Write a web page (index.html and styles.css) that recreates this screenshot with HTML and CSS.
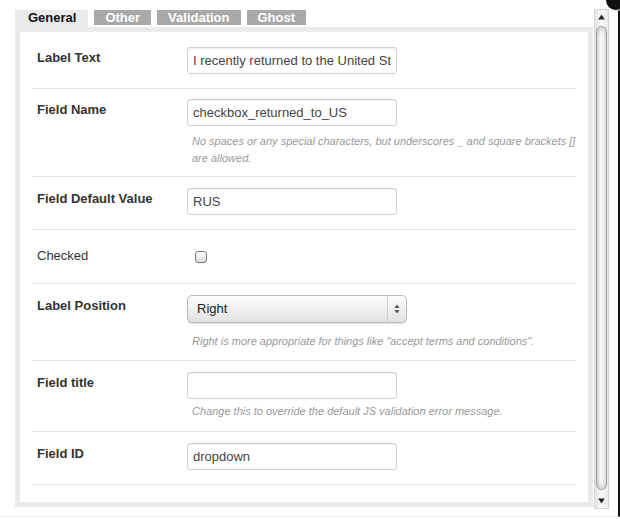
FILE: index.html
```html
<!DOCTYPE html>
<html>
<head>
<meta charset="utf-8">
<link rel="stylesheet" href="styles.css">
</head>
<body>
<div class="dialog">
  <div class="main">
    <div class="tabs">
      <span class="tab active">General</span>
      <span class="tab">Other</span>
      <span class="tab">Validation</span>
      <span class="tab">Ghost</span>
    </div>
    <div class="panel">
      <div class="row first">
        <div class="label">Label Text</div>
        <div class="control"><input class="text" type="text" value="I recently returned to the United States"></div>
      </div>
      <div class="row help-row two">
        <div class="label">Field Name</div>
        <div class="control">
          <input class="text" type="text" value="checkbox_returned_to_US">
          <p class="help">No spaces or any special characters, but underscores _ and square brackets [] are allowed.</p>
        </div>
      </div>
      <div class="row">
        <div class="label">Field Default Value</div>
        <div class="control"><input class="text" type="text" value="RUS"></div>
      </div>
      <div class="row check-row">
        <div class="label plain">Checked</div>
        <div class="control"><span class="checkbox"></span></div>
      </div>
      <div class="row help-row sel">
        <div class="label">Label Position</div>
        <div class="control">
          <div class="select"><span class="value">Right</span><span class="arrows"><svg width="6" height="10" viewBox="0 0 6 10"><path d="M3 0.5 L5.6 4 L0.4 4 Z M3 9.5 L5.6 6 L0.4 6 Z" fill="#555"/></svg></span></div>
          <p class="help">Right is more appropriate for things like "accept terms and conditions".</p>
        </div>
      </div>
      <div class="row help-row title">
        <div class="label">Field title</div>
        <div class="control">
          <input class="text" type="text" value="">
          <p class="help">Change this to override the default JS validation error message.</p>
        </div>
      </div>
      <div class="row">
        <div class="label">Field ID</div>
        <div class="control"><input class="text" type="text" value="dropdown"></div>
      </div>
    </div>
  </div>
  <div class="scrollbar">
    <div class="arrow up"><svg width="7" height="6" viewBox="0 0 7 6"><path d="M3.5 0.5 L6.8 5.5 L0.2 5.5 Z" fill="#222"/></svg></div>
    <div class="track"><div class="thumb"></div></div>
    <div class="arrow down"><svg width="7" height="6" viewBox="0 0 7 6"><path d="M3.5 5.5 L6.8 0.5 L0.2 0.5 Z" fill="#222"/></svg></div>
  </div>
  <span class="close"></span>
</div>
</body>
</html>
```
FILE: styles.css
```css
html, body {
  margin: 0;
  padding: 0;
  background: #fff;
}
body {
  font-family: "Liberation Sans", Arial, sans-serif;
  color: #333;
  width: 620px;
  height: 519px;
  overflow: hidden;
}
.dialog {
  position: relative;
  box-sizing: border-box;
  width: 620px;
  height: 517px;
  display: flex;
  padding: 0 8px 0 15px;
  border-right: 2px solid #111;
  border-bottom: 1px solid #ececec;
}
.main {
  width: 578px;
  display: flex;
  flex-direction: column;
  padding: 10px 0 9px;
  box-sizing: border-box;
}
.tabs {
  display: flex;
  gap: 6px;
  height: 17px;
  align-items: flex-start;
}
.tab {
  height: 15px;
  line-height: 15px;
  padding: 0 11px;
  background: #a9a9a9;
  color: #fff;
  font-weight: bold;
  font-size: 13px;
}
.tab.active {
  height: 17px;
  padding: 0 12px 0 13px;
  background: #ebebeb;
  color: #111;
}
.panel {
  flex: 1;
  border: 5px solid #ebebeb;
  padding: 1px 12px 0;
  overflow: hidden;
}
.row {
  display: flex;
  padding: 11px 0 14px;
  border-bottom: 1px solid #e3e3e3;
}
.row.first {
  padding-top: 14px;
}
.row.two {
  padding-top: 10px;
  padding-bottom: 9px;
}
.row.check-row {
  padding-bottom: 15px;
}
.row.sel {
  padding-bottom: 10px;
}
.row.title {
  padding-bottom: 11px;
}
.label {
  width: 150px;
  padding: 2px 0 0 5px;
  font-size: 13px;
  line-height: 18px;
  font-weight: bold;
  color: #333;
}
.label.plain {
  font-weight: normal;
  padding-top: 6px;
}
.control {
  flex: 1;
  min-height: 27px;
}
.text {
  display: block;
  box-sizing: border-box;
  width: 210px;
  height: 27px;
  margin: 0;
  padding: 0 5px;
  border: 1px solid #cfcfcf;
  border-radius: 3px;
  box-shadow: inset 0 1px 1px rgba(0,0,0,0.06);
  font-family: "Liberation Sans", Arial, sans-serif;
  font-size: 13px;
  color: #444;
  background: #fff;
  outline: none;
}
.help {
  margin: 7px 0 0 5px;
  font-size: 11px;
  line-height: 17px;
  font-style: italic;
  color: #999;
}
.sel .help {
  margin-top: 10px;
}
.title .help {
  margin-top: 4px;
}
.checkbox {
  display: block;
  box-sizing: border-box;
  width: 12px;
  height: 12px;
  margin: 10px 0 0 8px;
  border: 1px solid #7d7d7d;
  border-radius: 3px;
  background: linear-gradient(#fdfdfd, #dcdcdc);
  box-shadow: 0 1px 0 rgba(0,0,0,0.05);
}
.select {
  display: flex;
  box-sizing: border-box;
  width: 220px;
  height: 28px;
  border: 1px solid #b9b9b9;
  border-radius: 5px;
  background: linear-gradient(#fcfcfc, #f0f0f0 50%, #e2e2e2);
  box-shadow: 0 1px 1px rgba(0,0,0,0.12);
  font-size: 13px;
  color: #222;
}
.select .value {
  flex: 1;
  line-height: 26px;
  padding-left: 9px;
}
.select .arrows {
  width: 18px;
  border-left: 1px solid #d0d0d0;
  display: flex;
  align-items: center;
  justify-content: center;
}
.scrollbar {
  width: 15px;
  margin: 9px 0 7px 1px;
  display: flex;
  flex-direction: column;
  box-sizing: border-box;
  border: 1px solid #d4d4d4;
  background: linear-gradient(to right, #e6e6e6, #f9f9f9 50%, #e9e9e9);
}
.arrow {
  height: 14px;
  display: flex;
  align-items: center;
  justify-content: center;
}
.arrow.down {
  height: 15px;
}
.track {
  flex: 1;
  padding: 2px 0 3px;
  display: flex;
}
.thumb {
  flex: 1;
  margin: 0 1px;
  border: 1px solid #9a9a9a;
  border-radius: 7px;
  background: linear-gradient(to right, #d8d8d8, #fafafa 45%, #e4e4e4);
  box-shadow: inset 0 6px 6px -4px rgba(0,0,0,0.15), inset 0 -6px 6px -4px rgba(0,0,0,0.15);
}
.close {
  position: absolute;
  top: -11px;
  right: -9px;
  width: 20px;
  height: 20px;
  border-radius: 50%;
  background: #111;
  border: 1px solid #fff;
}
```
